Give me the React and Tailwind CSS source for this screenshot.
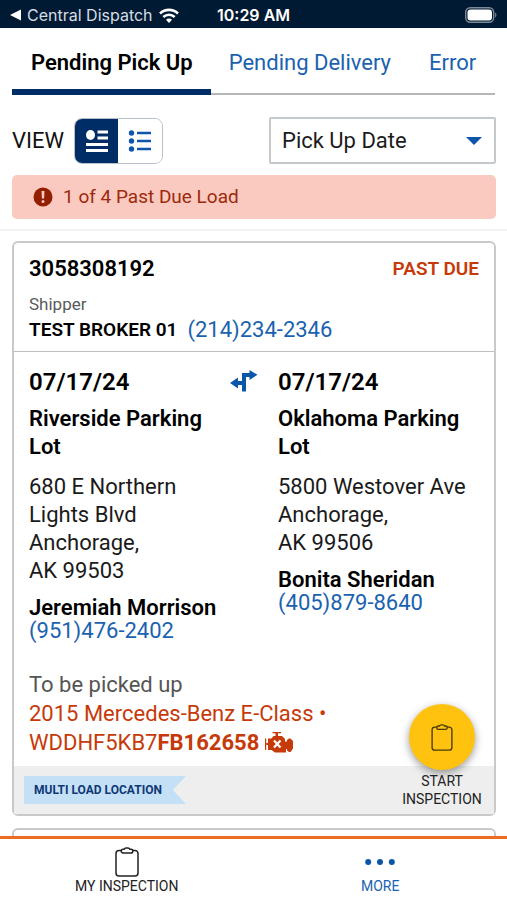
import React from "react";

function Clipboard({ className }) {
  return (
    <svg viewBox="0 0 24 30" className={className} fill="none" stroke="currentColor" strokeWidth="1.5" aria-hidden="true">
      <path d="M6.500 3.500H4a3 3 0 0 0-3 3V26a3 3 0 0 0 3 3h16a3 3 0 0 0 3-3V6.500a3 3 0 0 0-3-3h-2.500" />
      <path d="M8 2.200h1.200C9.600 1.200 10.200 1 11 1h2c.8 0 1.400.2 1.800 1.200H16c1.100 0 1.800.7 1.800 1.700S17.100 6 16 6H8c-1.100 0-1.800-1.100-1.800-2.100S6.900 2.200 8 2.200z" />
    </svg>
  );
}

function RouteArrows() {
  return (
    <svg viewBox="0 0 28 22" className="h-[22px] w-7 text-[#0a57a8]" fill="currentColor" aria-label="to">
      <path d="M0 13l8-5.500v3.500h4V3h7.500V0L27.500 4.800 19.500 10V7H16V21.500H12v-6.500H8v3.500z" />
    </svg>
  );
}

function EngineOff() {
  return (
    <svg viewBox="0 0 28 22" className="inline-block h-[22px] w-7 align-[-4px]" fill="#c63a0a" aria-label="Inoperable">
      <path d="M7.500 0h8.500v1.300h-3V4H17l3 3v2.500h2V8l2-1.500h1.500l2.500 2.500v7.500L25.500 20H24l-2-1.500V17h-1v3.500H10L6.500 18H3V6.500h3.500L8.500 4h2V1.300H7.500z" />
      <path d="M0 6.500h1.200v11.500H0z" />
      <path d="M1.200 11h2v2h-2z" />
      <path d="M9 8.500l6.500 7M15.500 8.500l-6.500 7" stroke="#fff" strokeWidth="2.200" />
    </svg>
  );
}

function StatusBar() {
  return (
    <div className="grid h-7 shrink-0 grid-cols-[1fr_auto_1fr] items-center bg-[#001a33] px-2.5 pt-0.5 font-[Inter,sans-serif] text-white">
      <div className="flex items-center gap-1.5 text-base">
        <svg viewBox="0 0 11 12" className="h-3 w-[11px]" fill="currentColor" aria-hidden="true">
          <path d="M0 6L11 .5v11z" />
        </svg>
        <span className="text-[#d5dde4]">Central Dispatch</span>
        <svg viewBox="0 0 20 15" className="h-[15px] w-5" fill="none" stroke="currentColor" strokeWidth="2.600" aria-label="Wi-Fi">
          <path d="M1 5.500a13 13 0 0 1 18 0M4.300 9a8.300 8.300 0 0 1 11.400 0" />
          <path d="M10 15l-3-3.200a4.200 4.200 0 0 1 6 0z" fill="currentColor" stroke="none" />
        </svg>
      </div>
      <span className="text-base font-semibold">10:29 AM</span>
      <svg viewBox="0 0 32 16" className="h-4 w-8 justify-self-end" aria-label="Battery full">
        <rect x=".7" y=".7" width="28" height="14.600" rx="4.500" fill="none" stroke="#7c8a99" strokeWidth="1.400" />
        <rect x="2.500" y="2.500" width="24.500" height="11" rx="3" fill="#fff" />
        <path d="M30.200 5.500c1.600.7 1.600 4.300 0 5z" fill="#7c8a99" />
      </svg>
    </div>
  );
}

function Tabs() {
  return (
    <div role="tablist" className="mx-3 flex h-[67px] shrink-0 border-b-2 border-[#b5b8bb] text-[22px] whitespace-nowrap">
      <button role="tab" aria-selected="true" className="-mb-0.5 border-b-6 border-[#002d66] pt-2 pr-[18px] pl-[19px] font-semibold text-black">
        Pending Pick Up
      </button>
      <button role="tab" aria-selected="false" className="pt-1 pr-5 pl-[18px] text-[#1a62b0]">
        Pending Delivery
      </button>
      <button role="tab" aria-selected="false" className="pt-1 pl-[18px] text-[#1a62b0]">
        Error
      </button>
    </div>
  );
}

function Toolbar() {
  return (
    <div className="flex items-center">
      <span className="text-[22px] text-[#111]">VIEW</span>
      <div className="ml-2.5 flex h-[46px] overflow-hidden rounded-lg border border-[#b9bfc9]">
        <button aria-label="Detailed view" aria-pressed="true" className="flex w-[43px] items-center justify-center bg-[#002d66]">
          <svg viewBox="0 0 24 24" className="size-6" fill="#fff" aria-hidden="true">
            <ellipse cx="5.500" cy="6" rx="4.500" ry="5" />
            <path d="M12.500 1.500H23V4.500H12.500zM12.500 7.500H23v3H12.500zM1 14h22v3H1zM1 20h22v3H1z" />
          </svg>
        </button>
        <button aria-label="List view" aria-pressed="false" className="flex w-11 items-center justify-center bg-white">
          <svg viewBox="0 0 24 22" className="h-[22px] w-6" fill="#0f56ab" aria-hidden="true">
            <circle cx="3.500" cy="3" r="2.700" />
            <circle cx="3.500" cy="11" r="2.700" />
            <circle cx="3.500" cy="19" r="2.700" />
            <path d="M9 1.800h14v2.400H9zM9 9.800h14v2.400H9zM9 17.800h14v2.400H9z" />
          </svg>
        </button>
      </div>
      <div className="relative ml-auto w-[227px]">
        <select
          aria-label="Sort by"
          className="h-[47px] w-full appearance-none rounded-xs border-2 border-[#c3c9cd] bg-white pl-[11px] text-[22px] text-[#1c1c1c]"
        >
          <option>Pick Up Date</option>
        </select>
        <svg viewBox="0 0 16 8" className="pointer-events-none absolute top-5 right-3.5 h-2 w-4" fill="#0f56ab" aria-hidden="true">
          <path d="M0 0h16L8 8z" />
        </svg>
      </div>
    </div>
  );
}

function Stop({ place, lines, contact, phone }) {
  return (
    <div className="min-w-0 flex-1 text-[22px] text-[#1a1a1a]">
      <div className="text-2xl leading-8 font-semibold text-black">07/17/24</div>
      <div className="mt-[7px] leading-7 font-semibold text-black">{place}</div>
      <address className="mt-3 leading-7 not-italic">
        {lines.map((line) => (
          <div key={line}>{line}</div>
        ))}
      </address>
      <div className="mt-[11px] leading-[23px] font-semibold text-black">{contact}</div>
      <a href={"tel:" + phone} className="block leading-[23px] text-[#1a62b0]">
        {phone}
      </a>
    </div>
  );
}

function LoadCard() {
  return (
    <article className="relative rounded-md border-2 border-[#c9c9c9] bg-white">
      <header className="border-b border-[#bfbfbf] px-[15px] pt-3 pb-[7px]">
        <div className="flex items-center justify-between leading-7 font-semibold">
          <h2 className="text-[22px] text-black">3058308192</h2>
          <span className="text-[19px] text-[#c63a0a]">PAST DUE</span>
        </div>
        <div className="mt-[9px] text-[17px] leading-6 text-[#5a5a5a]">Shipper</div>
        <div className="flex items-center gap-2.5 leading-7">
          <span className="text-[19px] font-semibold text-black">TEST BROKER 01</span>
          <a href="tel:(214)234-2346" className="text-[22px] text-[#1a62b0]">
            (214)234-2346
          </a>
        </div>
      </header>
      <div className="flex px-[15px] pt-3.5">
        <Stop
          place="Riverside Parking Lot"
          lines={["680 E Northern", "Lights Blvd", "Anchorage,", "AK 99503"]}
          contact="Jeremiah Morrison"
          phone="(951)476-2402"
        />
        <div className="mr-5 w-7 pt-1">
          <RouteArrows />
        </div>
        <Stop
          place="Oklahoma Parking Lot"
          lines={["5800 Westover Ave", "Anchorage,", "AK 99506"]}
          contact="Bonita Sheridan"
          phone="(405)879-8640"
        />
      </div>
      <div className="px-[15px] pt-7 pb-[9px] text-[22px] leading-[29px] text-[#c63a0a]">
        <p className="text-[#555]">To be picked up</p>
        <p>2015 Mercedes-Benz E-Class •</p>
        <p className="whitespace-nowrap">
          WDDHF5KB7<b>FB162658</b> <EngineOff />
        </p>
      </div>
      <footer className="flex h-12 items-center bg-[#eeeeee] px-2.5">
        <span className="bg-[#c3e0f7] py-1 pr-6 pl-2.5 text-xs leading-5 font-bold text-[#0f3875] [clip-path:polygon(0_0,100%_0,calc(100%_-_13px)_50%,100%_100%,0_100%)]">
          MULTI LOAD LOCATION
        </span>
      </footer>
      <button className="absolute right-3 bottom-1.5 flex w-20 flex-col items-center text-sm leading-[18px] text-[#222]">
        <span className="mb-0.5 flex size-[66px] items-center justify-center rounded-full bg-[#ffc20e] text-[#4a3b0c] shadow-[0_3px_8px_rgba(0,0,0,0.4)]">
          <Clipboard className="h-[27px] w-[22px]" />
        </span>
        START INSPECTION
      </button>
    </article>
  );
}

function BottomNav() {
  return (
    <nav className="grid h-16 shrink-0 grid-cols-2 border-t-3 border-[#f06a22] bg-white text-sm leading-[18px]">
      <a href="#inspection" className="flex flex-col items-center pt-2 text-[#222]">
        <Clipboard className="h-[30px] w-6" />
        <span>MY INSPECTION</span>
      </a>
      <a href="#more" className="flex flex-col items-center pt-2 text-[#1a62b0]">
        <svg viewBox="0 0 30 30" className="size-[30px]" fill="#0a57a8" aria-hidden="true">
          <circle cx="3.200" cy="15" r="3" />
          <circle cx="15" cy="15" r="3" />
          <circle cx="26.800" cy="15" r="3" />
        </svg>
        <span>MORE</span>
      </a>
    </nav>
  );
}

export default function App() {
  return (
    <div className="flex h-screen flex-col overflow-hidden bg-white font-[Roboto,sans-serif]">
      <StatusBar />
      <Tabs />
      <div className="shrink-0 border-b-2 border-[#f3f3f3] pt-[22px] pr-[11px] pb-2.5 pl-3">
        <Toolbar />
        <div role="alert" className="mt-[11px] flex h-11 items-center gap-2.5 rounded-[5px] bg-[#fac9bf] pl-[21px] text-[19px] text-[#9c2a0c]">
          <svg viewBox="0 0 20 20" className="size-5" aria-hidden="true">
            <circle cx="10" cy="10" r="9.500" fill="#931f00" />
            <path d="M8.500 4h3l-.4 7.500H8.900z" fill="#fac9bf" />
            <circle cx="10" cy="14.500" r="1.500" fill="#fac9bf" />
          </svg>
          1 of 4 Past Due Load
        </div>
      </div>
      <main className="flex min-h-0 flex-1 flex-col gap-3 overflow-hidden pt-2.5 pr-[11px] pl-3">
        <LoadCard />
        <article className="h-40 shrink-0 rounded-md border-2 border-[#c9c9c9] bg-white" />
      </main>
      <BottomNav />
    </div>
  );
}
